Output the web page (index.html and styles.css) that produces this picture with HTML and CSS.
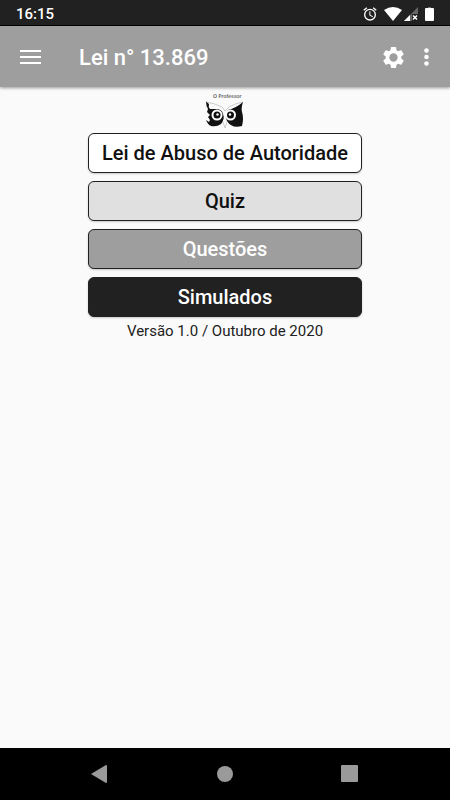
FILE: index.html
```html
<!DOCTYPE html>
<html lang="pt-BR">
<head>
  <meta charset="UTF-8">
  <meta name="viewport" content="width=device-width, initial-scale=1.0">
  <title>Lei n° 13.869</title>
  <link rel="stylesheet" href="styles.css">
</head>
<body>
  <div class="status-bar">
    <span class="clock">16:15</span>
    <div class="status-icons">
      <svg class="alarm" width="16" height="16" viewBox="0 0 24 24" fill="#fff"><path d="M22 5.72l-4.6-3.86-1.29 1.53 4.6 3.86L22 5.72zM7.88 3.39L6.6 1.86 2 5.71l1.29 1.53 4.59-3.85zM12.5 8H11v6l4.75 2.85.75-1.23-4-2.37V8zM12 4a9 9 0 1 0 0 18 9 9 0 0 0 0-18zm0 16a7 7 0 1 1 0-14 7 7 0 0 1 0 14z"/></svg>
      <svg width="18" height="14" viewBox="0 0 18 14" fill="#fff"><path d="M0 3Q9-3 18 3L9 14z"/></svg>
      <svg width="14" height="14" viewBox="0 0 14 14"><path d="M14 0v14H0z" fill="#666"/><path d="M6 8v6H0z" fill="#fff"/><path d="M8 7h6v7H8z" fill="#212121"/><path d="M9 8.500l4 4M13 8.500l-4 4" stroke="#fff" stroke-width="1.500"/></svg>
      <svg class="battery" width="9" height="14" viewBox="0 0 9 14"><path d="M3 0h3v2H3z" fill="#777"/><rect y="1" width="9" height="13" rx="1" fill="#fff"/></svg>
    </div>
  </div>

  <header class="app-bar">
    <button class="icon-button" aria-label="Menu">
      <svg width="21" height="16" viewBox="0 0 21 16" fill="#fff"><path d="M0 0h21v2H0zM0 6h21v2H0zM0 12h21v2H0z"/></svg>
    </button>
    <h1>Lei n° 13.869</h1>
    <button class="icon-button" aria-label="Configurações">
      <svg width="25" height="25" viewBox="0 0 24 24" fill="#fff"><path d="M19.430 12.980c.04-.32.07-.64.07-.98s-.03-.66-.07-.98l2.110-1.650c.19-.15.24-.42.12-.64l-2-3.460c-.12-.22-.39-.3-.61-.22l-2.490 1c-.52-.4-1.080-.73-1.690-.98l-.38-2.650A.488.488 0 0 0 14 2h-4c-.25 0-.46.18-.49.42l-.38 2.650c-.61.25-1.170.59-1.690.98l-2.490-1c-.23-.09-.49 0-.61.22l-2 3.460c-.13.22-.07.49.12.64l2.110 1.650c-.04.32-.07.65-.07.98s.03.66.07.98l-2.110 1.650c-.19.15-.24.42-.12.64l2 3.460c.12.22.39.3.61.22l2.490-1c.52.4 1.080.73 1.690.98l.38 2.650c.03.24.24.42.49.42h4c.25 0 .46-.18.49-.42l.38-2.650c.61-.25 1.170-.59 1.690-.98l2.490 1c.23.09.49 0 .61-.22l2-3.460c.12-.22.07-.49-.12-.64l-2.110-1.650zM12 16a4 4 0 1 1 0-8 4 4 0 0 1 0 8z"/></svg>
    </button>
    <button class="icon-button" aria-label="Mais opções">
      <svg width="6" height="20" viewBox="0 0 6 20" fill="#fff"><circle cx="2.500" cy="2.500" r="2.300"/><circle cx="2.500" cy="9" r="2.300"/><circle cx="2.500" cy="15.500" r="2.300"/></svg>
    </button>
  </header>

  <main class="content">
    <svg class="logo" width="40" height="40" viewBox="0 0 40 40" role="img" aria-label="O Professor">
      <text class="logo-text" x="8" y="7">O Professor</text>
      <path d="M1 11Q9 12 17 16L20 20 24 16Q31 12 38 11" fill="none" stroke="#ccc"/>
      <path d="M1 10.500L4 13Q3 16 5 18L11 18Q17 18 18 23Q20 28 16 33Q12 36 6 35Q3 34 1 29L4 31 5 29 3 26 5 24 2 21 3 18Q1 15 1 10.500z" fill="#111"/>
      <path d="M38 11Q36 17 37 21Q39 27 37 35Q27 38 22 30Q19 24 23 19Q31 17 38 11z" fill="#111"/>
      <circle cx="12" cy="24" r="5.500" fill="#fff"/>
      <circle cx="25.500" cy="24" r="5.500" fill="#fff"/>
      <circle cx="12" cy="24" r="3.500" fill="#111"/>
      <circle cx="25.500" cy="24" r="3.500" fill="#111"/>
      <circle cx="12.500" cy="23.500" r="1.200" fill="#fff"/>
      <circle cx="25" cy="23.500" r="1.200" fill="#fff"/>
      <path d="M18 31l2 6 2-6" fill="none" stroke="#ccc"/>
    </svg>
    <nav class="menu">
      <button class="menu-button law">Lei de Abuso de Autoridade</button>
      <button class="menu-button quiz">Quiz</button>
      <button class="menu-button questions">Questões</button>
      <button class="menu-button exams">Simulados</button>
    </nav>
    <p class="version">Versão 1.0 / Outubro de 2020</p>
  </main>

  <footer class="nav-bar">
    <button class="icon-button" aria-label="Voltar">
      <svg width="18" height="18" viewBox="0 0 18 18" fill="#9a9a9a"><path d="M1 9L16 0q1 0 1 1v16q0 1-1 1z"/></svg>
    </button>
    <button class="icon-button" aria-label="Início">
      <svg width="18" height="18" viewBox="0 0 18 18" fill="#9a9a9a"><circle cx="9" cy="9" r="8"/></svg>
    </button>
    <button class="icon-button" aria-label="Recentes">
      <svg width="18" height="18" viewBox="0 0 18 18" fill="#9a9a9a"><rect x="-1" width="17" height="17" rx="1"/></svg>
    </button>
  </footer>
</body>
</html>
```
FILE: styles.css
```css
body {
  margin: 0;
  min-height: 100vh;
  display: flex;
  flex-direction: column;
  font-family: Roboto, sans-serif;
  background: #fafafa;
  color: #212121;
}

svg {
  display: block;
  overflow: visible;
}

button {
  font-family: inherit;
  cursor: pointer;
}

.status-bar {
  display: flex;
  justify-content: space-between;
  align-items: center;
  height: 23px;
  padding: 2px 16px 0;
  background: #212121;
  border-bottom: 1px solid #000;
  color: #fff;
}

.clock {
  font-size: 15px;
  font-weight: 500;
}

.status-icons {
  display: flex;
  align-items: center;
  gap: 2px;
}

.alarm {
  margin-right: 4px;
}

.battery {
  margin-left: 5px;
}

.app-bar {
  display: flex;
  align-items: center;
  gap: 18px;
  height: 59px;
  padding: 2px 20px 0;
  background: #9e9e9e;
  color: #fff;
  box-shadow: 0 1px 3px rgba(0, 0, 0, 0.4);
}

.app-bar h1 {
  flex: 1;
  margin: 0 0 0 20px;
  font-size: 22px;
  font-weight: 500;
}

.icon-button {
  padding: 0;
  border: none;
  background: none;
}

.content {
  flex: 1;
  display: flex;
  flex-direction: column;
  align-items: center;
  padding-top: 4px;
}

.logo-text {
  font-family: "DejaVu Sans", sans-serif;
  font-size: 5px;
  fill: #111;
}

.menu {
  display: flex;
  flex-direction: column;
  gap: 8px;
  width: 61%;
  margin-top: 2px;
}

.menu-button {
  height: 40px;
  padding: 0;
  border: 1px solid #212121;
  border-radius: 6px;
  font-size: 20px;
  font-weight: 500;
  box-shadow: 0 1px 2px rgba(0, 0, 0, 0.2);
}

.law {
  background: #fff;
  color: #111;
}

.quiz {
  background: #e0e0e0;
  color: #111;
}

.questions {
  background: #9e9e9e;
  color: #fff;
}

.exams {
  background: #212121;
  color: #fff;
}

.version {
  margin: 4px 0 0;
  font-size: 15px;
  line-height: 20px;
}

.nav-bar {
  display: flex;
  justify-content: space-between;
  align-items: center;
  height: 52px;
  padding: 0 20%;
  background: #000;
}
```
